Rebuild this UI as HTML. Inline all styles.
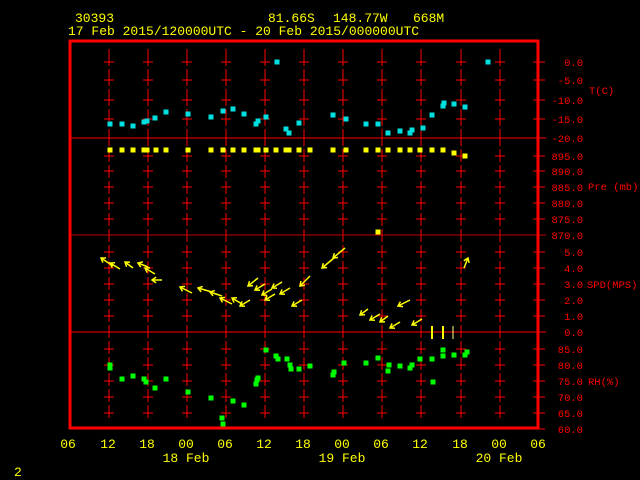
<!DOCTYPE html>
<html><head><meta charset="utf-8"><style>
html,body{margin:0;padding:0;background:#000;width:640px;height:480px;overflow:hidden}
svg{display:block}
text{font-family:"Liberation Mono",monospace;font-size:13px}
#lab text,.ax{font-size:10.5px}
</style></head><body>
<svg id="s" width="640" height="480" xmlns="http://www.w3.org/2000/svg">
<rect width="640" height="480" fill="#000"/>
<g fill="#ffff00">
<text x="75" y="22">30393</text>
<text x="268" y="22">81.66S</text><text x="333" y="22">148.77W</text><text x="413" y="22">668M</text>
<text x="68" y="35">17 Feb 2015/120000UTC - 20 Feb 2015/000000UTC</text>
</g>
<g id="grid" stroke="#ff0000" stroke-width="1" fill="none"></g>
<line x1="70" y1="138" x2="546" y2="138" stroke="#ff0000"/>
<line x1="70" y1="235" x2="546" y2="235" stroke="#c00000"/>
<line x1="70" y1="332" x2="546" y2="332" stroke="#ff0000"/>
<rect x="70" y="41" width="468" height="387" fill="none" stroke="#ff0000" stroke-width="3"/>
<g id="lab" fill="#ff0000" text-anchor="end"></g>
<g fill="#ff0000" class="ax">
<text class="ax" x="589" y="94">T(C)</text>
<text class="ax" x="588" y="190">Pre (mb)</text>
<text class="ax" x="587" y="288">SPD(MPS)</text>
<text class="ax" x="588" y="385">RH(%)</text>
</g>
<g fill="#ffff00" text-anchor="middle">
<text x="68" y="448">06</text><text x="108" y="448">12</text><text x="147" y="448">18</text><text x="186" y="448">00</text><text x="225" y="448">06</text><text x="264" y="448">12</text><text x="303" y="448">18</text><text x="342" y="448">00</text><text x="381" y="448">06</text><text x="420" y="448">12</text><text x="460" y="448">18</text><text x="499" y="448">00</text><text x="538" y="448">06</text>
<text x="186" y="462">18 Feb</text><text x="342" y="462">19 Feb</text><text x="499" y="462">20 Feb</text>
</g>
<text x="14" y="476" fill="#ffff00">2</text>
<g id="pts"></g>
<g stroke="#ffff00" stroke-width="1.5" fill="none" id="wind"></g>
<g stroke="#ffff00" stroke-width="2"><line x1="432" y1="326" x2="432" y2="339"/><line x1="443" y1="326" x2="443" y2="339"/></g>
<line x1="453" y1="326" x2="453" y2="339" stroke="#ffff80" stroke-width="1"/>
</svg>
<script>
var NS="http://www.w3.org/2000/svg";
function el(p,t,a){var e=document.createElementNS(NS,t);for(var k in a)e.setAttribute(k,a[k]);p.appendChild(e);return e;}
var g=document.getElementById('grid');
var cols=[109,148,187,226,265,304,343,382,421,461,500];
var rows=[62,80,100,119,156,171,187,203,219,252,268,284,300,316,349,365,381,397,413];
var segs=[[49,66],[69,86],[89,106],[109,126],[129,146],[149,162],[165,178],[181,194],[197,210],[213,226],[229,242],[245,258],[261,274],[277,290],[293,306],[309,322],[325,338],[341,354],[357,370],[373,386],[389,402],[405,418]];
cols.forEach(function(x){
 segs.forEach(function(s){el(g,'line',{x1:x,y1:s[0],x2:x,y2:s[1]});});
 rows.forEach(function(y){el(g,'line',{x1:x-5,y1:y,x2:x+5,y2:y});});
});
var lab=document.getElementById('lab');
var L=[[62,"0.0"],[80,"-5.0"],[100,"-10.0"],[119,"-15.0"],[138,"-20.0"],[156,"895.0"],[171,"890.0"],[187,"885.0"],[203,"880.0"],[219,"875.0"],[235,"870.0"],[252,"5.0"],[268,"4.0"],[284,"3.0"],[300,"2.0"],[316,"1.0"],[332,"0.0"],[349,"85.0"],[365,"80.0"],[381,"75.0"],[397,"70.0"],[413,"65.0"],[429,"60.0"]];
L.forEach(function(a){el(g,'line',{x1:533,y1:a[0],x2:545,y2:a[0]});var t=el(lab,'text',{x:583,y:a[0]+4});t.textContent=a[1];});
var p=document.getElementById('pts');
function sq(arr,c){arr.forEach(function(a){el(p,'rect',{x:a[0]-2.5,y:a[1]-2.5,width:5,height:5,fill:c});});}
sq([[110,124],[122,124],[133,126],[144,122],[147,121],[155,118],[166,112],[188,114],[211,117],[223,111],[233,109],[244,114],[256,124],[258,121],[266,117],[286,129],[289,133],[299,123],[277,62],[333,115],[346,119],[366,124],[378,124],[388,133],[400,131],[410,133],[412,130],[423,128],[432,115],[443,106],[444,103],[454,104],[465,107],[488,62]],"#00e0e0");
var yp=[];[110,122,133,144,147,156,166,188,211,223,233,244,256,258,266,276,286,289,299,310,333,346,366,378,388,400,410,420,432,443,454,465].forEach(function(x,i){yp.push([x,x>450?(x>460?156:153):150]);});
yp.push([378,232]);sq(yp,"#ffff00");
sq([[110,365],[110,368],[122,379],[133,376],[144,379],[146,382],[155,388],[166,379],[188,392],[211,398],[233,401],[244,405],[222,418],[223,424],[256,384],[257,380],[258,378],[266,350],[276,356],[278,359],[287,359],[290,365],[291,369],[299,369],[310,366],[333,375],[334,372],[344,363],[366,363],[378,358],[388,371],[389,365],[400,366],[410,368],[412,365],[420,359],[432,359],[433,382],[443,350],[443,356],[454,355],[465,355],[467,352]],"#00ff00");
var w=document.getElementById('wind');
function arr(x,y,dx,dy){var L=Math.hypot(dx,dy),ux=dx/L,uy=dy/L;
 el(w,'line',{x1:x,y1:y,x2:x+dx,y2:y+dy});
 var h=5,c=Math.cos(0.6),s=Math.sin(0.6);
 var ax=x+h*(ux*c-uy*s),ay=y+h*(uy*c+ux*s),bx=x+h*(ux*c+uy*s),by=y+h*(uy*c-ux*s);
 el(w,'polyline',{points:ax+','+ay+' '+x+','+y+' '+bx+','+by});}
[[101,258,12,8],[110,263,10,6],[125,262,8,6],[138,263,10,4],[145,268,10,6],[152,280,10,0],[180,287,12,6],[198,288,14,4],[210,292,12,4],[220,298,12,6],[232,298,10,6],[240,306,10,-6],[248,286,10,-8],[255,290,10,-6],[262,295,10,-6],[265,300,10,-6],[272,288,10,-6],[280,294,10,-6],[292,306,10,-6],[300,286,10,-10],[322,268,12,-10],[333,258,12,-10],[360,315,8,-6],[370,320,10,-6],[380,322,8,-6],[390,328,10,-6],[398,306,12,-6],[412,325,10,-6],[468,258,-4,10]].forEach(function(a){arr(a[0],a[1],a[2],a[3]);});
</script>
</body></html>
